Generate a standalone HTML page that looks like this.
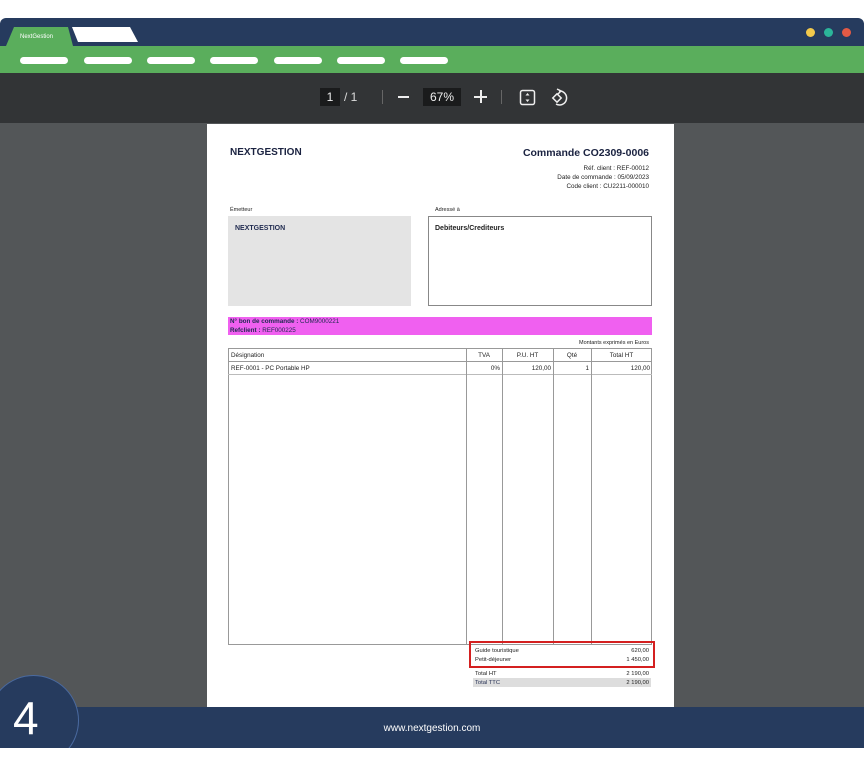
<!DOCTYPE html>
<html><head><style>
*{margin:0;padding:0;box-sizing:border-box}
body{width:864px;height:768px;background:#fff;position:relative;overflow:hidden;font-family:"Liberation Sans",sans-serif}
.abs{position:absolute}
.win{left:0;top:18px;width:864px;height:730px;border-radius:6px 6px 0 0;overflow:hidden}
.pill{position:absolute;top:57px;height:7px;width:48px;background:#fff;border-radius:4px}
.t{position:absolute;font-size:6.3px;color:#222;white-space:nowrap}
.r{text-align:right}
.vl{position:absolute;top:348px;height:296px;width:1px;background:#999}
</style></head><body>
<div class="abs win">
 <div class="abs" style="left:0;top:0;width:864px;height:28px;background:#263b5e"></div>
 <div class="abs" style="left:0;top:28px;width:864px;height:27px;background:#5aae5c"></div>
 <div class="abs" style="left:0;top:55px;width:864px;height:50px;background:#323436"></div>
 <div class="abs" style="left:0;top:105px;width:864px;height:584px;background:#535658"></div>
 <div class="abs" style="left:0;top:689px;width:864px;height:41px;background:#263b5e"></div>
</div>
<svg class="abs" style="left:0;top:18px" width="150" height="30"><polygon points="6,28 14,9 68,9 73,28" fill="#5aae5c"/><polygon points="72,9 130,9 138,24 78,24" fill="#fff"/></svg>
<div class="abs" style="left:20px;top:34px;font-size:6px;color:#fff">NextGestion</div>
<div class="abs" style="left:806px;top:28px;width:9px;height:9px;border-radius:50%;background:#f2c94c"></div>
<div class="abs" style="left:824px;top:28px;width:9px;height:9px;border-radius:50%;background:#2bb59a"></div>
<div class="abs" style="left:842px;top:28px;width:9px;height:9px;border-radius:50%;background:#e35a45"></div>
<div class="pill" style="left:20px"></div><div class="pill" style="left:84px"></div><div class="pill" style="left:147px"></div><div class="pill" style="left:210px"></div><div class="pill" style="left:274px"></div><div class="pill" style="left:337px"></div><div class="pill" style="left:400px"></div>
<div class="abs" style="left:320px;top:88px;width:20px;height:18px;background:#1a1b1c;color:#eee;font-size:12px;text-align:center;line-height:18px">1</div>
<div class="abs" style="left:344px;top:88px;color:#ddd;font-size:12px;line-height:18px">/ 1</div>
<div class="abs" style="left:382px;top:90px;width:1px;height:14px;background:#666"></div>
<div class="abs" style="left:398px;top:96px;width:11px;height:2px;background:#eee"></div>
<div class="abs" style="left:423px;top:88px;width:38px;height:18px;background:#1a1b1c;color:#eee;font-size:12px;text-align:center;line-height:18px">67%</div>
<div class="abs" style="left:474px;top:96px;width:13px;height:2px;background:#eee"></div>
<div class="abs" style="left:479.5px;top:90px;width:2px;height:13px;background:#eee"></div>
<div class="abs" style="left:501px;top:90px;width:1px;height:14px;background:#666"></div>
<svg class="abs" style="left:519px;top:88px" width="60" height="20"><rect x="1.5" y="2.5" width="14" height="14" rx="2" fill="none" stroke="#eee" stroke-width="1.5"/><path d="M8.5 5l-2 2.5h4zM8.5 14l-2-2.5h4z" fill="#eee"/><path d="M40 3a7 7 0 1 1-3 13" fill="none" stroke="#eee" stroke-width="1.5"/><path d="M38 1l4 2-3 3" fill="none" stroke="#eee" stroke-width="1.5"/><rect x="35" y="7" width="6" height="6" transform="rotate(45 38 10)" fill="none" stroke="#eee" stroke-width="1.5"/></svg>
<div class="abs" style="left:207px;top:124px;width:467px;height:583px;background:#fff"></div>
<div class="abs" style="left:230px;top:147px;font-size:10px;font-weight:bold;color:#1a2240">NEXTGESTION</div>
<div class="abs" style="left:480px;top:147px;width:169px;text-align:right;font-size:10.5px;font-weight:bold;color:#1a2240">Commande CO2309-0006</div>
<div class="t r" style="left:480px;top:165px;width:169px;line-height:8.8px">Réf. client : REF-00012<br>Date de commande : 05/09/2023<br>Code client : CU2211-000010</div>
<div class="t" style="left:230px;top:207px;font-size:5.5px">Émetteur</div>
<div class="t" style="left:435px;top:207px;font-size:5.5px">Adressé à</div>
<div class="abs" style="left:228px;top:216px;width:183px;height:90px;background:#e4e4e4"></div>
<div class="abs" style="left:235px;top:225px;font-size:7px;font-weight:bold;color:#1f2a4f">NEXTGESTION</div>
<div class="abs" style="left:428px;top:216px;width:224px;height:90px;border:1px solid #888"></div>
<div class="abs" style="left:435px;top:225px;font-size:7px;font-weight:bold;color:#222">Debiteurs/Crediteurs</div>
<div class="abs" style="left:228px;top:317px;width:424px;height:18px;background:#f060f0"></div>
<div class="t" style="left:230px;top:318px;line-height:8.5px;color:#1f2a4f"><b>N° bon de commande :</b> COM9000221<br><b>Refclient :</b> REF000225</div>
<div class="t r" style="left:480px;top:340px;width:169px;font-size:5.5px">Montants exprimés en Euros</div>
<div class="abs" style="left:228px;top:348px;width:424px;height:297px;border:1px solid #999"></div>
<div class="abs" style="left:228px;top:361px;width:424px;height:1px;background:#999"></div>
<div class="abs" style="left:228px;top:374px;width:424px;height:1px;background:#bbb"></div>
<div class="vl" style="left:466px"></div><div class="vl" style="left:502px"></div><div class="vl" style="left:553px"></div><div class="vl" style="left:591px"></div>
<div class="t" style="left:231px;top:352px">Désignation</div>
<div class="t" style="left:466px;top:352px;width:36px;text-align:center">TVA</div>
<div class="t" style="left:502px;top:352px;width:51px;text-align:center">P.U. HT</div>
<div class="t" style="left:553px;top:352px;width:38px;text-align:center">Qté</div>
<div class="t" style="left:591px;top:352px;width:61px;text-align:center">Total HT</div>
<div class="t" style="left:231px;top:365px">REF-0001 - PC Portable HP</div>
<div class="t r" style="left:466px;top:365px;width:34px">0%</div>
<div class="t r" style="left:502px;top:365px;width:49px">120,00</div>
<div class="t r" style="left:553px;top:365px;width:36px">1</div>
<div class="t r" style="left:591px;top:365px;width:59px">120,00</div>
<div class="abs" style="left:469px;top:641px;width:186px;height:27px;border:2px solid #d42020"></div>
<div class="t" style="left:475px;top:647px;line-height:9px;font-size:5.8px">Guide touristique<br>Petit-déjeuner</div>
<div class="t r" style="left:560px;top:647px;width:89px;line-height:9px;font-size:5.8px">620,00<br>1 450,00</div>
<div class="abs" style="left:473px;top:678px;width:178px;height:9px;background:#ddd"></div>
<div class="t" style="left:475px;top:670px;line-height:9px;font-size:5.8px">Total HT<br><span style="color:#1f2a4f">Total TTC</span></div>
<div class="t r" style="left:560px;top:670px;width:89px;line-height:9px;font-size:5.8px">2 190,00<br>2 190,00</div>
<div class="abs" style="left:0;top:707px;width:864px;height:41px;background:#263b5e"></div>
<div class="abs" style="left:0;top:708px;width:864px;text-align:center;line-height:41px;font-size:10px;color:#fff">www.nextgestion.com</div>
<div class="abs" style="left:0;top:668px;width:80px;height:80px;overflow:hidden"><div style="position:absolute;left:-12px;top:7px;width:91px;height:91px;border-radius:50%;background:#263b5e;border:1.5px solid #4a6aa0"></div></div>
<div class="abs" style="left:13px;top:690px;font-size:46px;color:#fff;line-height:56px">4</div>
</body></html>
